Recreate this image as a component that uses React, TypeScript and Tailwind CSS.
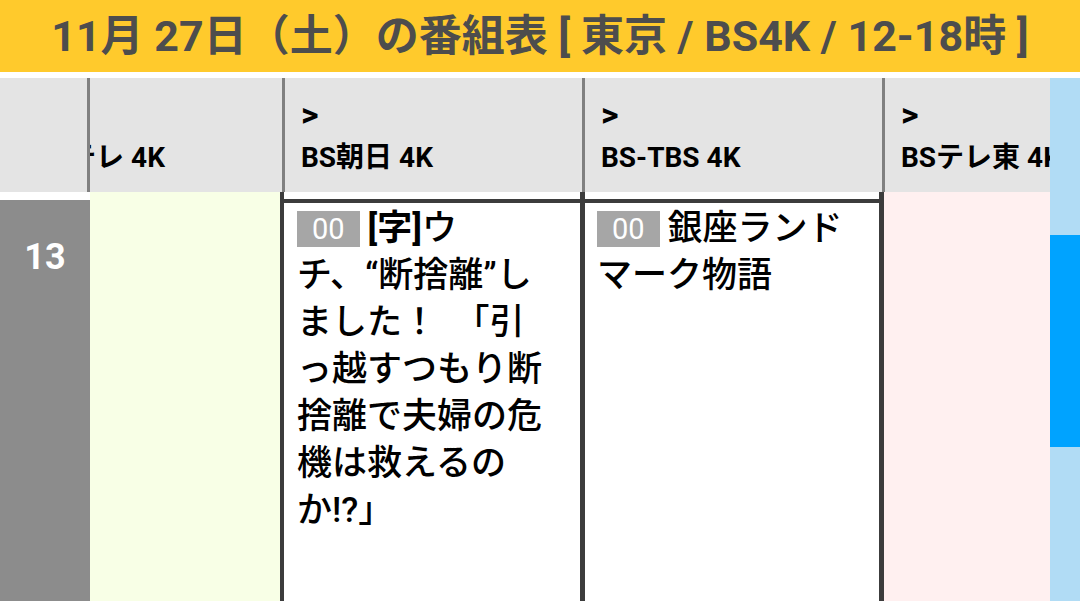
import React from "react";

const font = "font-['Roboto','Noto_Sans_CJK_JP',sans-serif]";

function ChannelHead({ name, width }: { name: string; width: string }) {
    return (
        <div className={`${width} min-w-0 h-full shrink-0 border-l-[3px] border-[#808080] pl-4 pt-[15px] overflow-hidden`}>
            <div className="text-[34px] leading-[43px] font-bold text-black whitespace-nowrap">&gt;</div>
            <div className="text-[28px] leading-[43px] font-bold text-black whitespace-nowrap">{name}</div>
        </div>
    );
}

function Badge() {
    return (
        <span className="inline-block align-middle bg-[#a6a6a6] text-white text-[29px] leading-[36px] h-[36px] px-[15px] mr-2 font-['Roboto',sans-serif] font-normal -translate-y-[2px]">
            00
        </span>
    );
}

export default function App() {
    return (
        <div className={`w-[1080px] h-[601px] overflow-hidden bg-white ${font}`}>
            {/* title bar */}
            <div className="h-[72px] bg-[#ffca2c] flex items-center justify-center">
                <h1 className="text-[43px] font-bold text-[#4d4d4d] whitespace-nowrap">
                    11月 27日（土）の番組表 [ 東京 / BS4K / 12-18時 ]
                </h1>
            </div>

            <div className="mt-[6px] h-[523px] flex">
                <div className="flex-1 min-w-0 flex flex-col">
                    {/* channel header */}
                    <div className="h-[114px] bg-[#e4e4e4] flex">
                        <div className="w-[87px] shrink-0"></div>
                        <div className="w-[195px] shrink-0 border-l-[3px] border-[#808080] overflow-hidden">
                            <div className="w-[300px] ml-[-101px] pl-4 pt-[15px]">
                                <div className="text-[34px] leading-[43px] font-bold text-black whitespace-nowrap">&gt;</div>
                                <div className="text-[28px] leading-[43px] font-bold text-black whitespace-nowrap">BS日テレ 4K</div>
                            </div>
                        </div>
                        <ChannelHead name="BS朝日 4K" width="w-[300px]" />
                        <ChannelHead name="BS-TBS 4K" width="w-[300px]" />
                        <ChannelHead name="BSテレ東 4K" width="flex-1" />
                    </div>

                    {/* programs */}
                    <div className="flex-1 flex">
                        <div className="w-[90px] shrink-0 flex flex-col">
                            <div className="h-[8px] bg-white"></div>
                            <div className="flex-1 bg-[#8c8c8c] pt-[37px] text-center">
                                <span className="text-[36px] leading-[40px] font-bold text-white">13</span>
                            </div>
                        </div>
                        <div className="w-[190px] shrink-0 bg-[#f8ffe6]"></div>

                        <div className="w-[300px] shrink-0 border-l-4 border-[#3c3c3c] flex flex-col">
                            <div className="h-[7px]"></div>
                            <div className="flex-1 border-t-4 border-[#3c3c3c] pl-[13px] pr-[30px] pt-[2px] text-[35px] leading-[47px] font-medium text-black">
                                <Badge /><span className="font-bold">[字]</span>ウ<br />
                                チ、“断捨離”しました！　「引っ越すつもり断捨離で夫婦の危機は救えるのか!?」
                            </div>
                        </div>

                        <div className="w-[299px] shrink-0 border-l-[5px] border-[#3c3c3c] flex flex-col">
                            <div className="h-[7px]"></div>
                            <div className="flex-1 border-t-4 border-[#3c3c3c] pl-[12px] pr-[30px] pt-[2px] text-[35px] leading-[47px] font-medium text-black">
                                <Badge />銀座ランドマーク物語
                            </div>
                        </div>

                        <div className="flex-1 min-w-0 border-l-[5px] border-[#3c3c3c] bg-[#fff0f0]"></div>
                    </div>
                </div>

                {/* scrollbar */}
                <div className="w-[30px] shrink-0 bg-[#b1dcf5] flex flex-col">
                    <div className="h-[157px]"></div>
                    <div className="h-[212px] bg-[#00a3ff]"></div>
                </div>
            </div>
        </div>
    );
}
